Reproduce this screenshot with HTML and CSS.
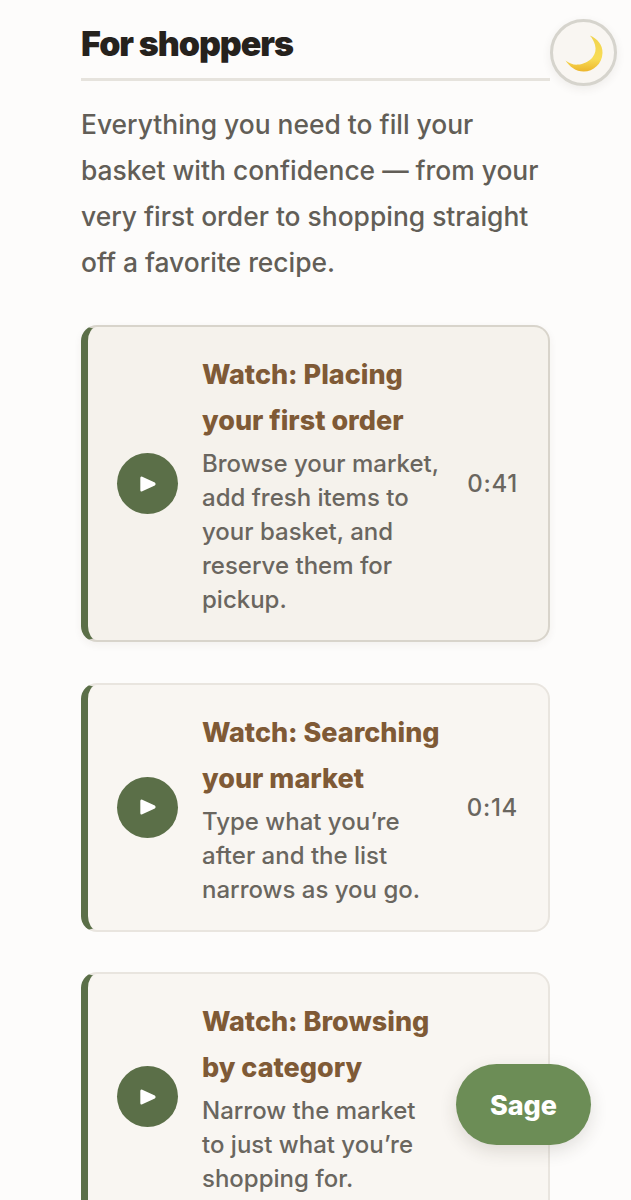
FILE: index.html
```html
<!DOCTYPE html>
<html lang="en">
<head>
<meta charset="utf-8">
<title>For shoppers</title>
<link rel="stylesheet" href="styles.css">
</head>
<body>
<main class="page">
  <h2 class="heading">For shoppers</h2>
  <p class="intro">Everything you need to fill your basket with confidence — from your very first order to shopping straight off a favorite recipe.</p>
  <div class="cards">
    <article class="card card-active">
      <span class="play"><svg viewBox="0 0 16 16" width="16" height="16"><path d="M0.3 2 Q0.3 -0.2 2.3 0.7 L14.8 6.6 Q16.4 8 14.8 9.4 L2.3 15.3 Q0.3 16.2 0.3 14 Z" fill="#fff"/></svg></span>
      <div class="body">
        <h3 class="title">Watch: Placing your first order</h3>
        <p class="desc">Browse your market, add fresh items to your basket, and reserve them for pickup.</p>
      </div>
      <span class="time">0:41</span>
    </article>
    <article class="card">
      <span class="play"><svg viewBox="0 0 16 16" width="16" height="16"><path d="M0.3 2 Q0.3 -0.2 2.3 0.7 L14.8 6.6 Q16.4 8 14.8 9.4 L2.3 15.3 Q0.3 16.2 0.3 14 Z" fill="#fff"/></svg></span>
      <div class="body">
        <h3 class="title">Watch: Searching your market</h3>
        <p class="desc">Type what you’re after and the list narrows as you go.</p>
      </div>
      <span class="time">0:14</span>
    </article>
    <article class="card">
      <span class="play"><svg viewBox="0 0 16 16" width="16" height="16"><path d="M0.3 2 Q0.3 -0.2 2.3 0.7 L14.8 6.6 Q16.4 8 14.8 9.4 L2.3 15.3 Q0.3 16.2 0.3 14 Z" fill="#fff"/></svg></span>
      <div class="body">
        <h3 class="title">Watch: Browsing by category</h3>
        <p class="desc">Narrow the market to just what you’re shopping for.</p>
      </div>
      <span class="time">0:22</span>
    </article>
  </div>
</main>
<button class="theme" type="button" aria-label="Toggle dark mode">
  <svg viewBox="0 0 40 40" width="40" height="40">
    <defs><linearGradient id="moon" x1="0.5" y1="0" x2="0.5" y2="1"><stop offset="0" stop-color="#f0d34e"/><stop offset="0.65" stop-color="#f8dc55"/><stop offset="1" stop-color="#ecb52c"/></linearGradient></defs>
    <path d="M25.8 2.5 C33.5 5.5 38.8 12 38.5 20 C38.2 31 29 38.8 19.5 38.6 C12 38.4 5.5 33.8 1.5 27.5 C5.5 30.6 9.5 32 14 31.6 C19 31.1 24.8 29 28.6 24.2 C31.6 20.3 32.2 16.5 31 12 C30.2 8.6 28.2 5 25.8 2.5 Z" fill="url(#moon)"/>
  </svg>
</button>
<button class="sage" type="button">Sage</button>
</body>
</html>
```

FILE: styles.css
```css
* { box-sizing: border-box; }
html, body { margin: 0; height: 1200px; overflow: hidden; }
body {
  background: #fdfcfb;
  font-family: Inter, "Liberation Sans", sans-serif;
  color: #5f5b54;
}
.page { width: 631px; padding: 21px 81px 0; }
.heading {
  margin: 0;
  padding-bottom: 11px;
  border-bottom: 3px solid #e6e3dd;
  font-size: 34px;
  line-height: 46px;
  font-weight: 900;
  letter-spacing: -1.05px;
  color: #26221d;
}
.intro {
  margin: 20px 0 0;
  font-size: 26.4px;
  line-height: 46px;
  font-weight: 500;
  color: #625e57;
}
.cards { display: flex; flex-direction: column; gap: 40.5px; margin-top: 40px; }
.card {
  display: flex;
  align-items: center;
  padding: 24px 30px 24px 29px;
  background: #f9f6f2;
  border: 2px solid #e9e5df;
  border-left: 7px solid #5b6f48;
  border-radius: 16px;
}
.card-active {
  background: #f5f2ec;
  border-color: #d8d4cb;
  border-left-color: #5b6f48;
  box-shadow: 0 3px 8px rgba(60, 50, 40, 0.06);
}
.play {
  flex: none;
  width: 61px;
  height: 61px;
  border-radius: 50%;
  background: #5b6f48;
  display: flex;
  align-items: center;
  justify-content: center;
  margin-right: 24px;
}
.body { flex: 1; min-width: 0; padding-top: 1px; margin-bottom: -1px; }
.title {
  margin: 0 0 3px;
  font-size: 27px;
  line-height: 46px;
  font-weight: 800;
  color: #7f5a36;
}
.desc {
  margin: 0;
  font-size: 24px;
  line-height: 34px;
  font-weight: 500;
  color: #6a665f;
}
.time {
  flex: none;
  margin-left: 24px;
  font-size: 24px;
  font-weight: 500;
  letter-spacing: 0.7px;
  color: #6a665f;
}
.theme {
  position: absolute;
  left: 550px;
  top: 19px;
  width: 67px;
  height: 67px;
  padding: 0;
  border: 3px solid #d6d4cd;
  border-radius: 50%;
  background: #f9f6f2;
  box-shadow: 0 3px 10px rgba(60, 50, 40, 0.08);
  display: flex;
  align-items: center;
  justify-content: center;
}
.sage {
  position: absolute;
  left: 456px;
  top: 1064px;
  width: 135px;
  height: 81px;
  padding: 2px 0 0;
  border: 0;
  border-radius: 41px;
  background: #6c8d56;
  color: #fff;
  font-family: inherit;
  font-size: 27px;
  font-weight: 800;
  box-shadow: 0 6px 18px rgba(50, 40, 30, 0.14);
}
```
